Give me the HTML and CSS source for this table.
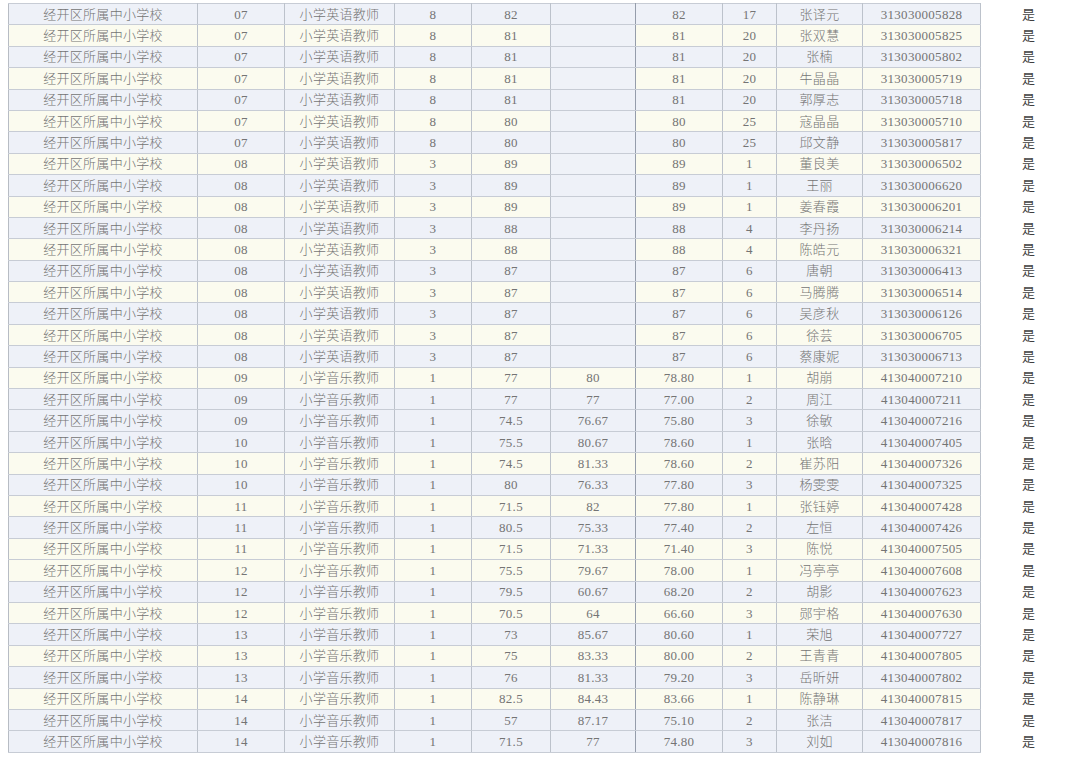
FILE: index.html
```html
<!DOCTYPE html>
<html lang="zh-CN">
<head>
<meta charset="utf-8">
<title>成绩表</title>
<link rel="stylesheet" href="styles.css">
</head>
<body>
<table class="sheet">
<colgroup>
<col class="c1"><col class="c2"><col class="c3"><col class="c4"><col class="c5"><col class="c6"><col class="c7"><col class="c8"><col class="c9"><col class="c10"><col class="c11">
</colgroup>
<tbody>
<tr class="b"><td>经开区所属中小学校</td><td>07</td><td>小学英语教师</td><td>8</td><td>82</td><td class="mid e"></td><td>82</td><td>17</td><td>张译元</td><td>313030005828</td><td class="yes">是</td></tr>
<tr class="y"><td>经开区所属中小学校</td><td>07</td><td>小学英语教师</td><td>8</td><td>81</td><td class="mid e"></td><td>81</td><td>20</td><td>张双慧</td><td>313030005825</td><td class="yes">是</td></tr>
<tr class="b"><td>经开区所属中小学校</td><td>07</td><td>小学英语教师</td><td>8</td><td>81</td><td class="mid e"></td><td>81</td><td>20</td><td>张楠</td><td>313030005802</td><td class="yes">是</td></tr>
<tr class="y"><td>经开区所属中小学校</td><td>07</td><td>小学英语教师</td><td>8</td><td>81</td><td class="mid e"></td><td>81</td><td>20</td><td>牛晶晶</td><td>313030005719</td><td class="yes">是</td></tr>
<tr class="b"><td>经开区所属中小学校</td><td>07</td><td>小学英语教师</td><td>8</td><td>81</td><td class="mid e"></td><td>81</td><td>20</td><td>郭厚志</td><td>313030005718</td><td class="yes">是</td></tr>
<tr class="y"><td>经开区所属中小学校</td><td>07</td><td>小学英语教师</td><td>8</td><td>80</td><td class="mid e"></td><td>80</td><td>25</td><td>寇晶晶</td><td>313030005710</td><td class="yes">是</td></tr>
<tr class="b"><td>经开区所属中小学校</td><td>07</td><td>小学英语教师</td><td>8</td><td>80</td><td class="mid e"></td><td>80</td><td>25</td><td>邱文静</td><td>313030005817</td><td class="yes">是</td></tr>
<tr class="y"><td>经开区所属中小学校</td><td>08</td><td>小学英语教师</td><td>3</td><td>89</td><td class="mid e"></td><td>89</td><td>1</td><td>董良美</td><td>313030006502</td><td class="yes">是</td></tr>
<tr class="b"><td>经开区所属中小学校</td><td>08</td><td>小学英语教师</td><td>3</td><td>89</td><td class="mid e"></td><td>89</td><td>1</td><td>王丽</td><td>313030006620</td><td class="yes">是</td></tr>
<tr class="y"><td>经开区所属中小学校</td><td>08</td><td>小学英语教师</td><td>3</td><td>89</td><td class="mid e"></td><td>89</td><td>1</td><td>姜春霞</td><td>313030006201</td><td class="yes">是</td></tr>
<tr class="b"><td>经开区所属中小学校</td><td>08</td><td>小学英语教师</td><td>3</td><td>88</td><td class="mid e"></td><td>88</td><td>4</td><td>李丹扬</td><td>313030006214</td><td class="yes">是</td></tr>
<tr class="y"><td>经开区所属中小学校</td><td>08</td><td>小学英语教师</td><td>3</td><td>88</td><td class="mid e"></td><td>88</td><td>4</td><td>陈皓元</td><td>313030006321</td><td class="yes">是</td></tr>
<tr class="b"><td>经开区所属中小学校</td><td>08</td><td>小学英语教师</td><td>3</td><td>87</td><td class="mid e"></td><td>87</td><td>6</td><td>唐朝</td><td>313030006413</td><td class="yes">是</td></tr>
<tr class="y"><td>经开区所属中小学校</td><td>08</td><td>小学英语教师</td><td>3</td><td>87</td><td class="mid e"></td><td>87</td><td>6</td><td>马腾腾</td><td>313030006514</td><td class="yes">是</td></tr>
<tr class="b"><td>经开区所属中小学校</td><td>08</td><td>小学英语教师</td><td>3</td><td>87</td><td class="mid e"></td><td>87</td><td>6</td><td>吴彦秋</td><td>313030006126</td><td class="yes">是</td></tr>
<tr class="y"><td>经开区所属中小学校</td><td>08</td><td>小学英语教师</td><td>3</td><td>87</td><td class="mid e"></td><td>87</td><td>6</td><td>徐芸</td><td>313030006705</td><td class="yes">是</td></tr>
<tr class="b"><td>经开区所属中小学校</td><td>08</td><td>小学英语教师</td><td>3</td><td>87</td><td class="mid e"></td><td>87</td><td>6</td><td>蔡康妮</td><td>313030006713</td><td class="yes">是</td></tr>
<tr class="y"><td>经开区所属中小学校</td><td>09</td><td>小学音乐教师</td><td>1</td><td>77</td><td class="mid">80</td><td>78.80</td><td>1</td><td>胡崩</td><td>413040007210</td><td class="yes">是</td></tr>
<tr class="b"><td>经开区所属中小学校</td><td>09</td><td>小学音乐教师</td><td>1</td><td>77</td><td class="mid">77</td><td>77.00</td><td>2</td><td>周江</td><td>413040007211</td><td class="yes">是</td></tr>
<tr class="b"><td>经开区所属中小学校</td><td>09</td><td>小学音乐教师</td><td>1</td><td>74.5</td><td class="mid">76.67</td><td>75.80</td><td>3</td><td>徐敏</td><td>413040007216</td><td class="yes">是</td></tr>
<tr class="b"><td>经开区所属中小学校</td><td>10</td><td>小学音乐教师</td><td>1</td><td>75.5</td><td class="mid">80.67</td><td>78.60</td><td>1</td><td>张晗</td><td>413040007405</td><td class="yes">是</td></tr>
<tr class="y"><td>经开区所属中小学校</td><td>10</td><td>小学音乐教师</td><td>1</td><td>74.5</td><td class="mid">81.33</td><td>78.60</td><td>2</td><td>崔苏阳</td><td>413040007326</td><td class="yes">是</td></tr>
<tr class="b"><td>经开区所属中小学校</td><td>10</td><td>小学音乐教师</td><td>1</td><td>80</td><td class="mid">76.33</td><td>77.80</td><td>3</td><td>杨雯雯</td><td>413040007325</td><td class="yes">是</td></tr>
<tr class="y"><td>经开区所属中小学校</td><td>11</td><td>小学音乐教师</td><td>1</td><td>71.5</td><td class="mid">82</td><td>77.80</td><td>1</td><td>张钰婷</td><td>413040007428</td><td class="yes">是</td></tr>
<tr class="b"><td>经开区所属中小学校</td><td>11</td><td>小学音乐教师</td><td>1</td><td>80.5</td><td class="mid">75.33</td><td>77.40</td><td>2</td><td>左恒</td><td>413040007426</td><td class="yes">是</td></tr>
<tr class="y"><td>经开区所属中小学校</td><td>11</td><td>小学音乐教师</td><td>1</td><td>71.5</td><td class="mid">71.33</td><td>71.40</td><td>3</td><td>陈悦</td><td>413040007505</td><td class="yes">是</td></tr>
<tr class="y"><td>经开区所属中小学校</td><td>12</td><td>小学音乐教师</td><td>1</td><td>75.5</td><td class="mid">79.67</td><td>78.00</td><td>1</td><td>冯亭亭</td><td>413040007608</td><td class="yes">是</td></tr>
<tr class="b"><td>经开区所属中小学校</td><td>12</td><td>小学音乐教师</td><td>1</td><td>79.5</td><td class="mid">60.67</td><td>68.20</td><td>2</td><td>胡影</td><td>413040007623</td><td class="yes">是</td></tr>
<tr class="y"><td>经开区所属中小学校</td><td>12</td><td>小学音乐教师</td><td>1</td><td>70.5</td><td class="mid">64</td><td>66.60</td><td>3</td><td>郧宇格</td><td>413040007630</td><td class="yes">是</td></tr>
<tr class="b"><td>经开区所属中小学校</td><td>13</td><td>小学音乐教师</td><td>1</td><td>73</td><td class="mid">85.67</td><td>80.60</td><td>1</td><td>荣旭</td><td>413040007727</td><td class="yes">是</td></tr>
<tr class="y"><td>经开区所属中小学校</td><td>13</td><td>小学音乐教师</td><td>1</td><td>75</td><td class="mid">83.33</td><td>80.00</td><td>2</td><td>王青青</td><td>413040007805</td><td class="yes">是</td></tr>
<tr class="b"><td>经开区所属中小学校</td><td>13</td><td>小学音乐教师</td><td>1</td><td>76</td><td class="mid">81.33</td><td>79.20</td><td>3</td><td>岳昕妍</td><td>413040007802</td><td class="yes">是</td></tr>
<tr class="y"><td>经开区所属中小学校</td><td>14</td><td>小学音乐教师</td><td>1</td><td>82.5</td><td class="mid">84.43</td><td>83.66</td><td>1</td><td>陈静琳</td><td>413040007815</td><td class="yes">是</td></tr>
<tr class="b"><td>经开区所属中小学校</td><td>14</td><td>小学音乐教师</td><td>1</td><td>57</td><td class="mid">87.17</td><td>75.10</td><td>2</td><td>张洁</td><td>413040007817</td><td class="yes">是</td></tr>
<tr class="b"><td>经开区所属中小学校</td><td>14</td><td>小学音乐教师</td><td>1</td><td>71.5</td><td class="mid">77</td><td>74.80</td><td>3</td><td>刘如</td><td>413040007816</td><td class="yes">是</td></tr>
</tbody>
</table>
</body>
</html>
```

FILE: styles.css
```css
html, body {
  margin: 0;
  padding: 0;
  background: #ffffff;
}

.sheet {
  margin: 3px 0 0 8px;
  border-collapse: collapse;
  table-layout: fixed;
  width: 1068px;
  font-family: "Liberation Serif", "Noto Sans CJK SC", serif;
  font-size: 13px;
  font-weight: 300;
  color: #747474;
}

.c1 { width: 189px; }
.c2 { width: 87px; }
.c3 { width: 110px; }
.c4 { width: 77px; }
.c5 { width: 79px; }
.c6 { width: 85px; }
.c7 { width: 87px; }
.c8 { width: 54px; }
.c9 { width: 86px; }
.c10 { width: 118px; }
.c11 { width: 96px; }

.sheet tr {
  height: 21.4px;
}

.sheet td {
  padding: 0;
  line-height: 15px;
  text-align: center;
  vertical-align: middle;
  white-space: nowrap;
  overflow: hidden;
  letter-spacing: 0.3px;
  border: 1px solid #c7ccd5;
  border-left-color: #bcc2cb;
  border-right-color: #bcc2cb;
}

.sheet tr.b td {
  background: #eef1f8;
}

.sheet tr.y td {
  background: #fbfbef;
}

.sheet td.mid {
  border-left-color: #959dab;
  border-right-color: #959dab;
}

.sheet tr.y td.e {
  background: #eff2f8;
}

.sheet tr td:first-child {
  border-left-color: #b7bcc4;
}

.sheet tr td.yes {
  background: #ffffff;
  border-top: none;
  border-bottom: none;
  border-right: none;
  font-weight: 400;
  color: #3f3f3f;
}
```
